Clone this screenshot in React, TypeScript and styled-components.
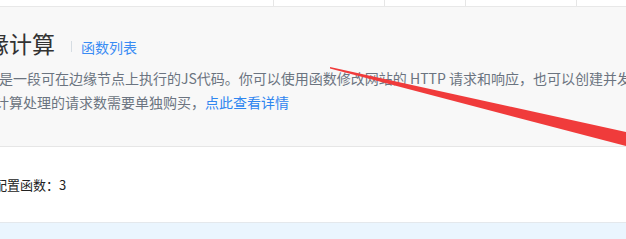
import React from "react";
import styled, { createGlobalStyle } from "styled-components";

const Global = createGlobalStyle`
  html, body { margin: 0; padding: 0; background: #fff; }
  body { font-family: "Noto Sans CJK SC", "Noto Sans", sans-serif; overflow: hidden; }
  #root { width: 626px; height: 239px; overflow: hidden; position: relative; }
`;

const Page = styled.div`
  width: 626px;
  height: 239px;
  display: flex;
  flex-direction: column;
  position: relative;
  overflow: hidden;
`;

const TopStrip = styled.div`
  height: 6px;
  display: flex;
  border-bottom: 1px solid #e8e8e8;
  background: #fff;
  flex-shrink: 0;
`;

const TopCell = styled.div<{ $w?: number; $first?: boolean }>`
  width: ${(p) => (p.$w ? `${p.$w}px` : "auto")};
  flex: ${(p) => (p.$w ? "0 0 auto" : "1 1 auto")};
  border-left: ${(p) => (p.$first ? "none" : "1px solid #e6e6e6")};
  box-sizing: border-box;
`;

const Header = styled.div`
  height: 140px;
  background: #f8f8f8;
  border-bottom: 1px solid #e6e6e6;
  box-sizing: border-box;
  padding-top: 20px;
  flex-shrink: 0;
`;

const TitleRow = styled.div`
  display: flex;
  align-items: baseline;
  height: 32px;
  margin-left: -14px;
  white-space: nowrap;
`;

const Title = styled.span`
  font-size: 23px;
  line-height: 32px;
  color: #333;
`;

const Divider = styled.span`
  display: inline-block;
  width: 1px;
  height: 11px;
  background: #d6dde3;
  margin: 0 9px 0 16px;
  align-self: center;
  position: relative;
  top: 3px;
`;

const TitleLink = styled.a`
  font-size: 14px;
  color: #3a8cf4;
  text-decoration: none;
`;

const Desc = styled.div`
  margin-top: 7px;
  display: flex;
  flex-direction: column;
`;

const DescLine = styled.div<{ $shift: number }>`
  margin-left: ${(p) => p.$shift}px;
  font-size: 14px;
  line-height: 24px;
  color: #6b7480;
  white-space: nowrap;
`;

const DescLink = styled.a`
  color: #2f86f0;
  text-decoration: none;
`;

const Body = styled.div`
  height: 76px;
  border-bottom: 1px solid #e4e8ec;
  box-sizing: border-box;
  display: flex;
  align-items: center;
  flex-shrink: 0;
`;

const Count = styled.div`
  font-size: 13px;
  color: #222;
  margin-left: -6px;
  white-space: nowrap;
`;

const Bottom = styled.div`
  flex: 1;
  background: #eaf5fe;
`;

const Arrow = styled.svg`
  position: absolute;
  left: 0;
  top: 0;
  pointer-events: none;
`;

export default function App() {
  return (
    <>
      <Global />
      <Page>
        <TopStrip>
          <TopCell $w={273} $first />
          <TopCell $w={111} />
          <TopCell $w={81} />
          <TopCell $w={111} />
          <TopCell />
        </TopStrip>
        <Header>
          <TitleRow>
            <Title>缘计算</Title>
            <Divider />
            <TitleLink>函数列表</TitleLink>
          </TitleRow>
          <Desc>
            <DescLine $shift={-1}>
              是一段可在边缘节点上执行的JS代码。你可以使用函数修改网站的 HTTP 请求和响应，也可以创建并发送新的请求
            </DescLine>
            <DescLine $shift={-5}>
              计算处理的请求数需要单独购买，<DescLink>点此查看详情</DescLink>
            </DescLine>
          </Desc>
        </Header>
        <Body>
          <Count>配置函数：3</Count>
        </Body>
        <Bottom />
        <Arrow width="626" height="239" viewBox="0 0 626 239">
          <polygon points="330,67 626,132 626,146 330,68.5" fill="#f03b3b" />
        </Arrow>
      </Page>
    </>
  );
}
